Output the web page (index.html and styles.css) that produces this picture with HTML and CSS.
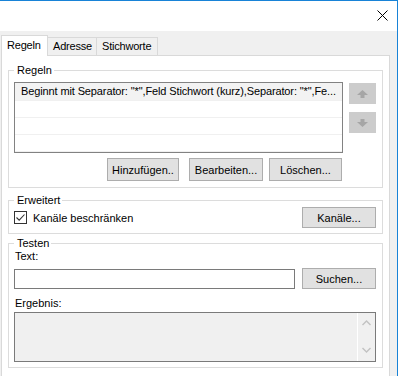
FILE: index.html
```html
<!DOCTYPE html>
<html lang="de">
<head>
    <meta charset="UTF-8">
    <meta name="viewport" content="width=device-width, initial-scale=1.0">
    <title>Regeln</title>
    <link rel="stylesheet" href="styles.css">
</head>
<body>
<div class="window">
    <div class="titlebar">
        <svg class="close" width="11" height="11" viewBox="0 0 11 11"><path d="M0.5 0.5L10.5 10.5M10.5 0.5L0.5 10.5" stroke="#000" stroke-width="1" fill="none"/></svg>
    </div>
    <div class="tabs">
        <div class="tab active tab-rules">Regeln</div>
        <div class="tab tab-addr">Adresse</div>
        <div class="tab tab-keys">Stichworte</div>
    </div>
    <div class="page">
        <fieldset class="group">
            <legend>Regeln</legend>
            <div class="rules-row">
                <ul class="listbox">
                    <li class="sel">Beginnt mit Separator: "*",Feld Stichwort (kurz),Separator: "*",Fe...</li>
                    <li></li>
                    <li></li>
                    <li></li>
                </ul>
                <div class="move">
                    <button class="arrow"><svg width="11" height="8" viewBox="0 0 11 8"><path d="M0 5L5.5 0L11 5H7.5V8H3.5V5Z" fill="#a6a6a6"/></svg></button>
                    <button class="arrow"><svg width="11" height="8" viewBox="0 0 11 8"><path d="M0 3L5.5 8L11 3H7.5V0H3.5V3Z" fill="#a6a6a6"/></svg></button>
                </div>
            </div>
            <div class="actions">
                <button class="btn btn-add">Hinzufügen..</button>
                <button class="btn btn-edit">Bearbeiten...</button>
                <button class="btn btn-del">Löschen...</button>
            </div>
        </fieldset>

        <fieldset class="group group-ext">
            <legend>Erweitert</legend>
            <div class="ext-row">
                <label class="check">
                    <span class="box"><svg width="11" height="11" viewBox="0 0 11 11"><path d="M1.5 5.5L4.2 8.2L9.5 2.5" stroke="#333" stroke-width="1.1" fill="none"/></svg></span>
                    Kanäle beschränken
                </label>
                <button class="btn btn-side">Kanäle...</button>
            </div>
        </fieldset>

        <fieldset class="group group-test">
            <legend>Testen</legend>
            <div class="label">Text:</div>
            <div class="search-row">
                <input type="text" class="text-input">
                <button class="btn btn-side btn-search">Suchen...</button>
            </div>
            <div class="label label-result">Ergebnis:</div>
            <div class="result">
                <div class="result-text"></div>
                <div class="scroll">
                    <svg width="9" height="6" viewBox="0 0 9 6"><path d="M0.5 5L4.5 1L8.5 5" stroke="#c2c2c2" stroke-width="1.4" fill="none"/></svg>
                    <svg width="9" height="6" viewBox="0 0 9 6"><path d="M0.5 1L4.5 5L8.5 1" stroke="#c2c2c2" stroke-width="1.4" fill="none"/></svg>
                </div>
            </div>
        </fieldset>
    </div>
</div>
</body>
</html>
```

FILE: styles.css
```css
body {
    margin: 0;
    font-family: 'Liberation Sans', Arial, sans-serif;
    font-size: 11px;
    color: #000;
    background: #f0f0f0;
}
.window {
    width: 398px;
    height: 376px;
    box-sizing: border-box;
    border-top: 1px solid #1883d7;
    border-right: 1px solid #1883d7;
    background: #f0f0f0;
    overflow: hidden;
}
.titlebar {
    height: 30px;
    background: #fff;
    display: flex;
    justify-content: flex-end;
    align-items: flex-start;
}
.close {
    margin: 9px 9px 0 0;
}
.tabs {
    display: flex;
    align-items: flex-end;
    height: 24px;
    padding-left: 1px;
}
.tab {
    height: 17px;
    line-height: 17px;
    box-sizing: content-box;
    padding-left: 5px;
    border: 1px solid #d9d9d9;
    border-bottom: none;
    margin-left: -1px;
    background: #f0f0f0;
    white-space: nowrap;
    overflow: hidden;
    letter-spacing: -0.2px;
}
.tab:first-child {
    margin-left: 0;
}
.tab.active {
    height: 20px;
    line-height: 18px;
    background: #fff;
    margin-bottom: -1px;
    position: relative;
}
.tab-rules {
    width: 40px;
}
.tab-addr {
    width: 43px;
}
.tab-keys {
    width: 55px;
}
.page {
    margin-left: 1px;
    width: 389px;
    height: 340px;
    box-sizing: border-box;
    border: 1px solid #d9d9d9;
    background: #fff;
    padding: 8px 6px 0 6px;
}
.group {
    margin: 0;
    padding: 0 6px 6px 5px;
    border: 1px solid #dcdcdc;
    min-width: 0;
}
.group legend {
    padding: 0 2px 0 3px;
    line-height: 13px;
}
.rules-row {
    display: flex;
    margin-top: 5px;
}
.listbox {
    list-style: none;
    margin: 0;
    padding: 0;
    width: 329px;
    height: 71px;
    box-sizing: border-box;
    border: 1px solid #828282;
    background: #fff;
}
.listbox li {
    height: 16px;
    line-height: 16px;
    border-bottom: 1px solid #f0f0f0;
    padding-left: 6px;
    white-space: nowrap;
    overflow: hidden;
    letter-spacing: -0.12px;
}
.listbox li.sel {
    height: 17px;
    line-height: 17px;
    background: #f3f3f3;
}
.move {
    display: flex;
    flex-direction: column;
    gap: 8px;
    margin-left: 6px;
    padding-top: 1px;
}
.arrow {
    width: 27px;
    height: 21px;
    padding: 0;
    border: 1px solid #cccccc;
    background: #cccccc;
    display: flex;
    align-items: center;
    justify-content: center;
}
.btn {
    font-family: inherit;
    font-size: 11px;
    color: #000;
    background: #e1e1e1;
    border: 1px solid #adadad;
    height: 23px;
    padding: 0;
}
.actions {
    display: flex;
    margin-top: 5px;
    padding-left: 93px;
}
.btn-add {
    width: 72px;
}
.btn-edit {
    width: 74px;
    margin-left: 10px;
}
.btn-del {
    width: 73px;
    margin-left: 6px;
}
.group-ext {
    margin-top: 6px;
    padding-bottom: 5px;
}
.ext-row {
    display: flex;
    justify-content: space-between;
    align-items: center;
}
.check {
    display: flex;
    align-items: center;
    gap: 6px;
}
.box {
    width: 13px;
    height: 13px;
    box-sizing: border-box;
    border: 1px solid #333;
    background: #fff;
    display: flex;
    align-items: center;
    justify-content: center;
}
.btn-side {
    width: 74px;
    height: 21px;
}
.group-test {
    margin-top: 3px;
    padding-bottom: 5px;
}
.label {
    line-height: 13px;
    padding-left: 1px;
}
.search-row {
    display: flex;
    align-items: center;
    justify-content: space-between;
    margin-top: 5px;
}
.text-input {
    width: 281px;
    height: 20px;
    box-sizing: border-box;
    margin: 1px 0 0 0;
    border: 1px solid #7a7a7a;
    background: #fff;
    padding: 0 3px;
    font-family: inherit;
    font-size: 11px;
}
.label-result {
    margin-top: 8px;
}
.result {
    margin-top: 2px;
    height: 50px;
    box-sizing: border-box;
    border: 1px solid #7a7a7a;
    background: #f0f0f0;
    display: flex;
}
.result-text {
    flex: 1;
}
.scroll {
    width: 17px;
    border-left: 1px solid #fff;
    display: flex;
    flex-direction: column;
    align-items: center;
    justify-content: space-between;
    padding: 7px 0 8px;
}
```
